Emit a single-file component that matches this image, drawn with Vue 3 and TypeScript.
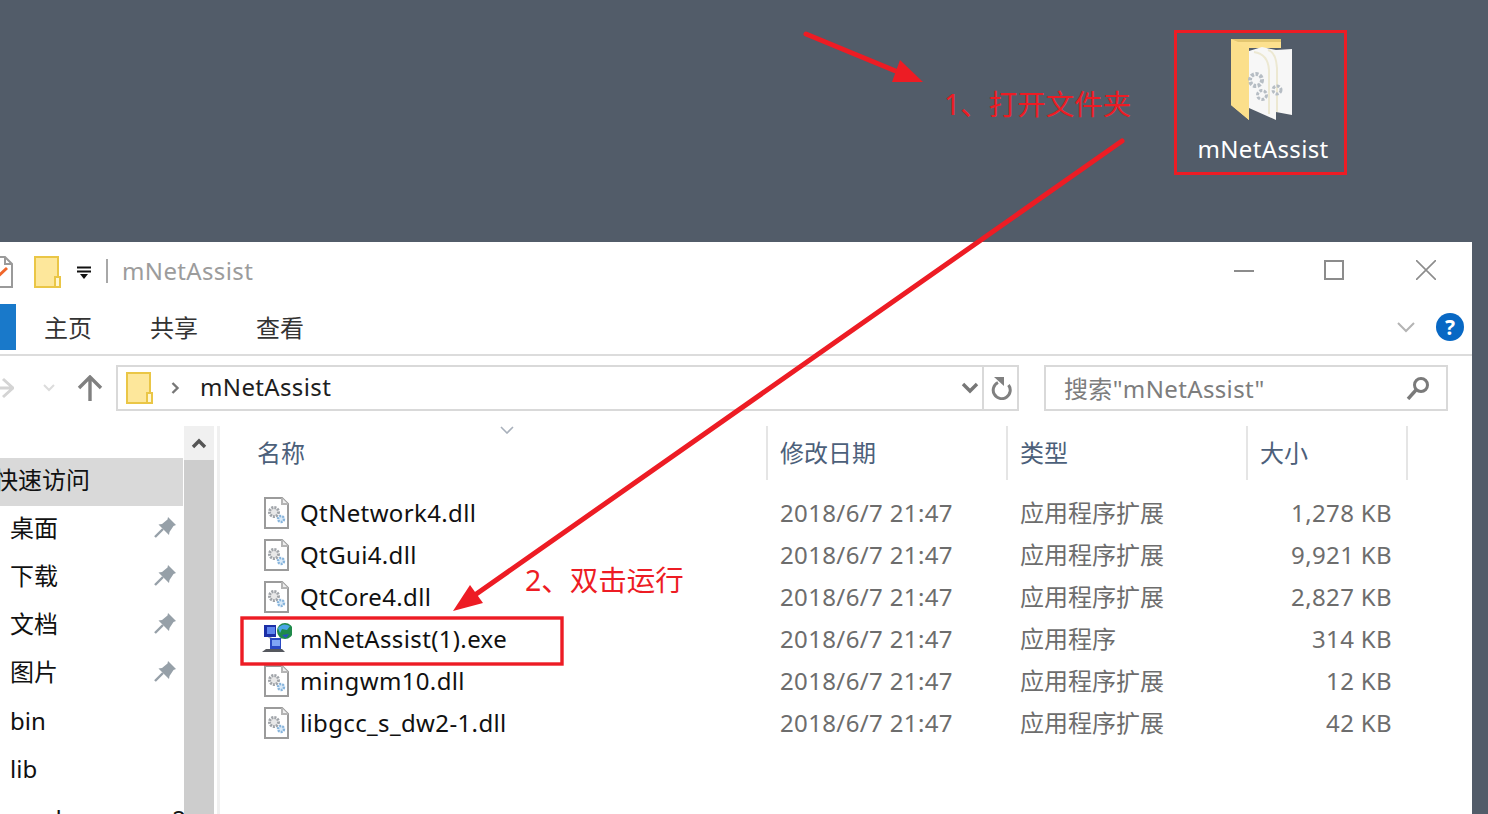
<template>
  <div class="page">
    <section class="desktop">
      <div class="shortcut">
        <svg class="big-folder" width="66" height="86" viewBox="0 0 66 86">
          <path d="M1 1 H51 V10 H19 V82 L1 67 Z" fill="#fce08e" />
          <path d="M1 1 H51 V4 H8 Z" fill="#e3c670" />
          <path d="M1 1 L19 13 V82 L1 67 Z" fill="#fbdf8b" />
          <path d="M19 13 L32 9 L46 12 L62 11 V77 L46 74 V82 L19 70 Z" fill="#f7f7f7" />
          <path d="M24 14 Q38 16 39 32 V76 M38 12 Q46 14 47 30 V74" fill="none" stroke="#ece8d2" stroke-width="2" />
          <circle cx="26" cy="42" r="6" fill="none" stroke="#b6bdc4" stroke-width="4" stroke-dasharray="3 1.5" />
          <circle cx="32" cy="57" r="4.5" fill="none" stroke="#b6bdc4" stroke-width="3" stroke-dasharray="3 1.5" />
          <circle cx="47" cy="52" r="4" fill="none" stroke="#b6bdc4" stroke-width="3" stroke-dasharray="3 1.5" />
        </svg>
        <span class="shortcut-name">mNetAssist</span>
      </div>
    </section>

    <section class="window">
      <header class="titlebar">
        <svg class="note-icon" width="30" height="32" viewBox="0 0 30 32">
          <path d="M1 1 H21 L28 8 V31 H1 Z" fill="#fff" stroke="#9a9a9a" stroke-width="2" />
          <path d="M21 1 V8 H28" fill="none" stroke="#9a9a9a" stroke-width="2" />
          <path d="M10 24 L23 12" stroke="#f0662a" stroke-width="3" />
        </svg>
        <svg class="small-folder" width="27" height="32" viewBox="0 0 27 32">
          <path d="M1 1 H24 V31 H1 Z" fill="#fde79b" stroke="#eac646" stroke-width="2" />
          <path d="M21 21 H26 V31 H21 Z" fill="#fff6cf" stroke="#eac646" stroke-width="2" />
        </svg>
        <svg class="qat" width="14" height="14" viewBox="0 0 14 14">
          <path d="M0 1.5 H14 M0 5.5 H14" stroke="#111" stroke-width="2" />
          <path d="M3 8 H11 L7 13 Z" fill="#111" />
        </svg>
        <i class="title-sep"></i>
        <span class="title">mNetAssist</span>
        <div class="controls">
          <svg class="min" width="20" height="20" viewBox="0 0 20 20"><path d="M0 11 H20" stroke="#8c8c8c" stroke-width="2" /></svg>
          <svg class="max" width="20" height="20" viewBox="0 0 20 20"><path d="M1 1 H19 V19 H1 Z" fill="none" stroke="#8c8c8c" stroke-width="2" /></svg>
          <svg width="20" height="20" viewBox="0 0 20 20"><path d="M0 0 L20 20 M20 0 L0 20" stroke="#8c8c8c" stroke-width="1.6" /></svg>
        </div>
      </header>

      <nav class="ribbon">
        <i class="file-tab"></i>
        <span class="tab">主页</span>
        <span class="tab">共享</span>
        <span class="tab">查看</span>
        <svg class="collapse" width="20" height="12" viewBox="0 0 20 12"><path d="M2 2 L10 10 L18 2" fill="none" stroke="#b4b4b4" stroke-width="2" /></svg>
        <span class="help">?</span>
      </nav>

      <div class="addressrow">
        <svg class="back" width="14" height="24" viewBox="0 0 14 24"><path d="M0 12 H12 M3 3 L13 12 L3 21" fill="none" stroke="#d4d4d4" stroke-width="3" /></svg>
        <svg class="recent" width="12" height="8" viewBox="0 0 12 8"><path d="M1 1 L6 6 L11 1" fill="none" stroke="#dcdcdc" stroke-width="2" /></svg>
        <svg class="up" width="26" height="26" viewBox="0 0 26 26"><path d="M13 26 V3 M2 13 L13 2 L24 13" fill="none" stroke="#808080" stroke-width="3.4" /></svg>
        <div class="address">
          <svg width="27" height="32" viewBox="0 0 27 32">
            <path d="M1 1 H24 V31 H1 Z" fill="#fde79b" stroke="#eac646" stroke-width="2" />
            <path d="M21 21 H26 V31 H21 Z" fill="#fff6cf" stroke="#eac646" stroke-width="2" />
          </svg>
          <svg class="crumb" width="9" height="12" viewBox="0 0 9 12"><path d="M1.5 1 L6.5 6 L1.5 11" fill="none" stroke="#777" stroke-width="2.4" /></svg>
          <span class="path">mNetAssist</span>
          <svg class="drop" width="18" height="12" viewBox="0 0 18 12"><path d="M2 2 L9 9 L16 2" fill="none" stroke="#777" stroke-width="3.4" /></svg>
          <div class="refresh">
            <svg width="22" height="24" viewBox="0 0 22 24">
              <path d="M18.5 9 A8.5 8.5 0 1 1 8 6.5" fill="none" stroke="#808080" stroke-width="3" />
              <path d="M4 1 H14 V10 Z" fill="#808080" />
            </svg>
          </div>
        </div>
        <div class="search">
          <span>搜索"mNetAssist"</span>
          <svg width="24" height="24" viewBox="0 0 24 24">
            <circle cx="15" cy="9" r="6.5" fill="none" stroke="#7a7a7a" stroke-width="3" />
            <path d="M10 14 L2 23" stroke="#7a7a7a" stroke-width="3.4" />
          </svg>
        </div>
      </div>

      <div class="body">
        <aside class="sidebar">
          <ul class="tree">
            <li v-for="item in navItems" :key="item.label" class="tree-item" :class="{ active: item.active, cjk: item.active || item.pinned }">
              <span>{{ item.label }}</span>
              <svg v-if="item.pinned" width="22" height="22" viewBox="0 0 22 22">
                <path d="M13 1 L21 9 L18.5 10 L14.5 16 L14 19 L3.5 8.5 L7 8 L12.5 3.5 Z" fill="#96a0a8" transform="translate(1 0)" />
                <path d="M9 13 L1 21" stroke="#96a0a8" stroke-width="2.4" />
              </svg>
              <em v-if="item.extra">{{ item.extra }}</em>
            </li>
          </ul>
          <div class="scrollbar">
            <div class="scroll-up">
              <svg width="16" height="11" viewBox="0 0 16 11"><path d="M2 9 L8 3 L14 9" fill="none" stroke="#555" stroke-width="3.4" /></svg>
            </div>
            <div class="scroll-thumb"></div>
          </div>
        </aside>

        <main class="files">
          <div class="file-head">
            <div class="col name">
              <span>名称</span>
              <svg class="sort" width="14" height="8" viewBox="0 0 14 8"><path d="M1 1 L7 7 L13 1" fill="none" stroke="#a8b0bb" stroke-width="1.6" /></svg>
            </div>
            <div class="col">修改日期</div>
            <div class="col">类型</div>
            <div class="col">大小</div>
          </div>
          <div v-for="file in files" :key="file.name" class="file-row">
            <div class="file-name">
              <svg v-if="file.exe" class="file-icon" width="34" height="32" viewBox="0 0 34 32">
                <path d="M10 13 L15 17 M24 14 L19 18" stroke="#a8acb4" stroke-width="2" />
                <rect x="6" y="2" width="12" height="12" fill="#1c2fa6" />
                <rect x="9" y="4" width="8" height="7" fill="#5f86ee" />
                <rect x="12" y="15" width="11" height="11" fill="#2a49c4" />
                <rect x="14" y="17" width="8" height="6" fill="#7fa5f5" />
                <path d="M4 29 H27 L24 26 H8 Z" fill="#55585e" />
                <circle cx="27" cy="8" r="8" fill="#1f8a4a" />
                <path d="M20 5 Q25 -1 32 3 L29 7 L24 6 L22 10 Z" fill="#49a6e6" />
                <path d="M24 12 L31 11 L28 15 Z" fill="#2a4fc0" />
              </svg>
              <svg v-else class="file-icon" width="34" height="32" viewBox="0 0 34 32">
                <path d="M7 1 H24 L30 7 V31 H7 Z" fill="#fff" stroke="#9b9b9b" stroke-width="2" />
                <path d="M24 1 V7 H30" fill="#eee" stroke="#b5b5b5" stroke-width="2" />
                <circle cx="16" cy="15" r="4.5" fill="#e8e8e8" stroke="#a0a4a9" stroke-width="3" stroke-dasharray="2 1" />
                <circle cx="23" cy="22" r="3" fill="#dcebf8" stroke="#86b4dc" stroke-width="2.4" stroke-dasharray="2 1" />
              </svg>
              <span>{{ file.name }}</span>
            </div>
            <div class="cell">2018/6/7 21:47</div>
            <div class="cell cjk">{{ file.type }}</div>
            <div class="cell size">{{ file.size }}</div>
          </div>
        </main>
      </div>
    </section>

    <!-- annotations drawn on top of the screenshot -->
    <svg class="marks" width="1488" height="814" viewBox="0 0 1488 814">
      <path d="M806 34 L898 72" stroke="#ed1c24" stroke-width="5" stroke-linecap="round" />
      <path d="M923 82 L900 60 L892 82 Z" fill="#ed1c24" />
      <path d="M1122 141 L472 597" stroke="#ed1c24" stroke-width="5" stroke-linecap="round" />
      <path d="M453 611 L470 585 L483 603 Z" fill="#ed1c24" />
      <rect x="1175.5" y="31.5" width="170" height="142" fill="none" stroke="#ed1c24" stroke-width="3" />
      <rect x="242" y="618" width="320" height="46" fill="none" stroke="#ed1c24" stroke-width="3.4" />
    </svg>
    <span class="note note-one">1、打开文件夹</span>
    <span class="note note-two">2、双击运行</span>
  </div>
</template>

<script setup lang="ts">
interface NavItem {
  label: string;
  active?: boolean;
  pinned?: boolean;
  extra?: string;
}

interface FileRow {
  name: string;
  type: string;
  size: string;
  exe?: boolean;
}

const dll = '应用程序扩展';

const navItems: NavItem[] = [
  { label: '快速访问', active: true },
  { label: '桌面', pinned: true },
  { label: '下载', pinned: true },
  { label: '文档', pinned: true },
  { label: '图片', pinned: true },
  { label: 'bin' },
  { label: 'lib' },
  { label: 'mod', extra: '2' },
];

const files: FileRow[] = [
  { name: 'QtNetwork4.dll', type: dll, size: '1,278 KB' },
  { name: 'QtGui4.dll', type: dll, size: '9,921 KB' },
  { name: 'QtCore4.dll', type: dll, size: '2,827 KB' },
  { name: 'mNetAssist(1).exe', type: '应用程序', size: '314 KB', exe: true },
  { name: 'mingwm10.dll', type: dll, size: '12 KB' },
  { name: 'libgcc_s_dw2-1.dll', type: dll, size: '42 KB' },
];
</script>

<style>
html,
body {
  margin: 0;
  height: 814px;
  overflow: hidden;
  background: #525c69;
}
</style>

<style scoped>
.page {
  position: relative;
  width: 1488px;
  height: 814px;
  overflow: hidden;
  background: #525c69;
  font-family: "Noto Sans", "Noto Sans CJK SC", sans-serif;
  font-size: 24px;
  letter-spacing: 0.36px;
}

.desktop {
  height: 242px;
  display: flex;
  justify-content: flex-end;
  padding-right: 155px;
  box-sizing: border-box;
}

.shortcut {
  width: 140px;
  padding-top: 38px;
  display: flex;
  flex-direction: column;
  align-items: center;
}

.big-folder {
  display: block;
}

.shortcut-name {
  margin-top: 7px;
  color: #fff;
  line-height: 36px;
  white-space: nowrap;
}

.window {
  width: 1472px;
  height: 572px;
  background: #fff;
  overflow: hidden;
  display: flex;
  flex-direction: column;
}

.titlebar {
  height: 58px;
  flex: none;
  display: flex;
  align-items: center;
}

.note-icon {
  margin-left: -16px;
  margin-top: 1px;
}

.small-folder {
  margin-left: 20px;
  margin-top: 1px;
}

.qat {
  margin-left: 16px;
  margin-top: 3px;
}

.title-sep {
  width: 2px;
  height: 24px;
  background: #a8a8a8;
  margin-left: 15px;
}

.title {
  margin-left: 14px;
  margin-top: -2px;
  color: #9c9c9c;
}

.controls {
  margin-left: auto;
  margin-right: 36px;
  margin-top: -2px;
  display: flex;
}

.min {
  margin-right: 70px;
}

.max {
  margin-right: 72px;
}

.ribbon {
  height: 56px;
  flex: none;
  display: flex;
  align-items: center;
  border-bottom: 2px solid #dcdcdc;
  box-sizing: border-box;
}

.file-tab {
  width: 16px;
  height: 46px;
  background: #1979ca;
  margin-right: 28px;
}

.tab {
  width: 48px;
  margin-right: 58px;
  font-size: 24px;
  letter-spacing: 0;
  line-height: 50px;
  color: #333;
  font-family: "Noto Sans CJK SC", sans-serif;
}

.collapse {
  margin-left: auto;
  margin-right: 20px;
}

.help {
  width: 28px;
  height: 28px;
  border-radius: 50%;
  background: #0868c4;
  color: #fff;
  font-weight: 700;
  font-size: 21px;
  letter-spacing: 0;
  line-height: 28px;
  text-align: center;
  margin-right: 8px;
}

.addressrow {
  height: 70px;
  flex: none;
  display: flex;
  align-items: center;
  padding-bottom: 7px;
  box-sizing: border-box;
}

.back {
  flex: none;
}

.recent {
  flex: none;
  margin-left: 29px;
}

.up {
  flex: none;
  margin-left: 22px;
}

.address {
  width: 903px;
  height: 46px;
  margin-left: 13px;
  border: 2px solid #d9d9d9;
  box-sizing: border-box;
  display: flex;
  align-items: center;
  padding-left: 8px;
}

.crumb {
  margin-left: 18px;
}

.path {
  margin-left: 20px;
  margin-top: -2px;
  color: #1e1e1e;
}

.drop {
  margin-left: auto;
  margin-right: 3px;
}

.refresh {
  width: 33px;
  height: 42px;
  border-left: 2px solid #d9d9d9;
  display: flex;
  align-items: center;
  justify-content: center;
}

.search {
  width: 404px;
  height: 46px;
  margin-left: 25px;
  border: 2px solid #d9d9d9;
  box-sizing: border-box;
  display: flex;
  align-items: center;
  justify-content: space-between;
  padding: 0 16px 0 18px;
  color: #7d7d7d;
}

.body {
  flex: 1;
  min-height: 0;
  display: flex;
}

.sidebar {
  width: 220px;
  flex: none;
  display: flex;
  border-right: 3px solid #f0f0f0;
  box-sizing: border-box;
}

.tree {
  width: 183px;
  flex: none;
  list-style: none;
  margin: 0;
  padding: 32px 0 0;
}

.tree-item {
  height: 48px;
  display: flex;
  align-items: center;
  justify-content: space-between;
  padding: 0 7px 4px 10px;
  color: #111;
  box-sizing: border-box;
  white-space: nowrap;
  letter-spacing: 0;
}

.tree-item.cjk {
  padding-bottom: 7px;
}

.tree-item:last-child {
  padding-bottom: 0;
}

.tree-item em {
  font-style: normal;
  margin-right: -10px;
}

.tree-item.active {
  background: #d9d9d9;
  padding-left: 0;
}

.tree-item.active span {
  margin-left: -6px;
}

.scrollbar {
  width: 30px;
  margin-left: 1px;
  display: flex;
  flex-direction: column;
  background: #f0f0f0;
}

.scroll-up {
  height: 34px;
  flex: none;
  display: flex;
  align-items: center;
  justify-content: center;
}

.scroll-thumb {
  flex: 1;
  background: #cdcdcd;
}

.files {
  flex: 1;
  min-width: 0;
}

.file-head {
  display: grid;
  grid-template-columns: 548px 240px 240px 160px;
  height: 54px;
  margin-bottom: 12px;
  color: #4c607a;
  font-size: 24px;
  letter-spacing: 0;
  font-family: "Noto Sans CJK SC", sans-serif;
}

.col {
  border-right: 2px solid #e5e5e5;
  padding-left: 12px;
  line-height: 52px;
  box-sizing: border-box;
}

.col.name {
  position: relative;
  padding-left: 37px;
}

.sort {
  position: absolute;
  left: 280px;
  top: 0;
}

.file-row {
  display: grid;
  grid-template-columns: 547px 240px 240px 145px;
  height: 42px;
  line-height: 42px;
  white-space: nowrap;
}

.file-name {
  display: flex;
  align-items: center;
  padding-left: 38px;
  color: #111;
}

.file-icon {
  flex: none;
  margin-right: 8px;
}

.cell {
  padding-left: 13px;
  color: #6d6d6d;
}

.cell.cjk {
  letter-spacing: 0;
}

.cell.size {
  text-align: right;
  padding: 0;
}

.marks {
  position: absolute;
  left: 0;
  top: 0;
  pointer-events: none;
}

.note {
  position: absolute;
  color: #ed1c24;
  font-size: 28.5px;
  letter-spacing: 0;
  line-height: 40px;
  white-space: nowrap;
}

.note-one {
  left: 944px;
  top: 84px;
}

.note-two {
  left: 525px;
  top: 560px;
}
</style>
